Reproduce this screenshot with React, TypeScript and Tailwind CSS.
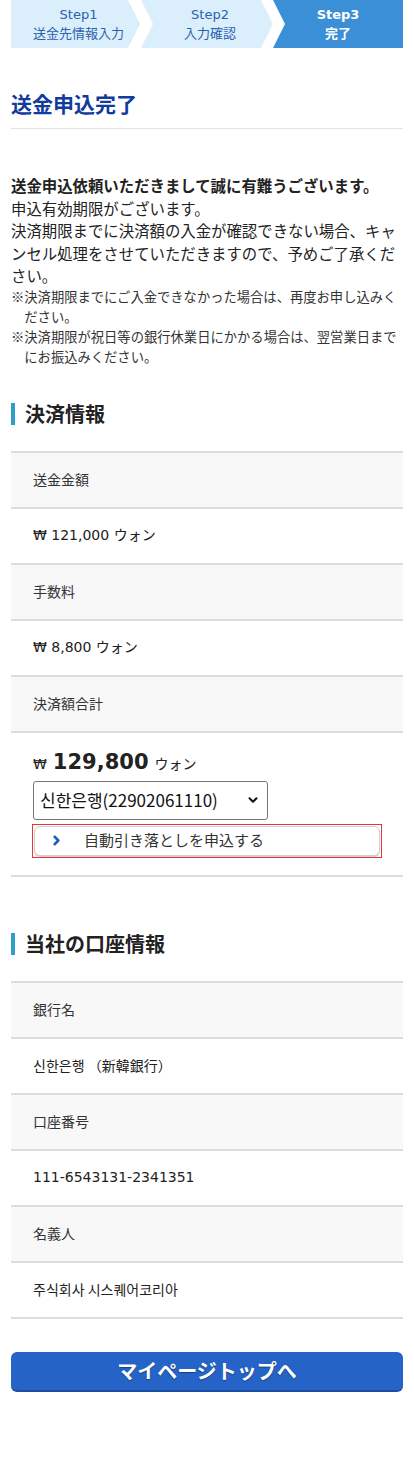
import React from 'react';
import { ChevronDown, ChevronRight } from 'lucide-react';

const jp = 'font-["Noto_Sans_CJK_JP","Noto_Sans_CJK_KR",sans-serif]';
const mix = 'font-["DejaVu_Sans","Noto_Sans_CJK_JP","Noto_Sans_CJK_KR",sans-serif]';
const kr = 'font-["Noto_Sans_CJK_KR","Noto_Sans_CJK_JP",sans-serif]';

const StepBar: React.FC = () => (
  <div className="flex px-[11px] h-[48px]">
    <div className="w-[129px] h-full bg-[#dbeefc] pl-[6px] flex flex-col items-center justify-center [clip-path:polygon(0_0,calc(100%-12px)_0,100%_50%,calc(100%-12px)_100%,0_100%)]">
      <div className={`${mix} text-[13px] leading-[18px] text-[#2b62ad]`}>Step1</div>
      <div className={`${jp} text-[13px] leading-[18px] text-[#2b62ad]`}>送金先情報入力</div>
    </div>
    <div className="ml-[1px] w-[132px] h-full bg-[#dbeefc] pl-[6px] flex flex-col items-center justify-center [clip-path:polygon(0_0,calc(100%-12px)_0,100%_50%,calc(100%-12px)_100%,0_100%,12px_50%)]">
      <div className={`${mix} text-[13px] leading-[18px] text-[#2b62ad]`}>Step2</div>
      <div className={`${jp} text-[13px] leading-[18px] text-[#2b62ad]`}>入力確認</div>
    </div>
    <div className="flex-1 h-full bg-[#3b8fd6] flex flex-col items-center justify-center [clip-path:polygon(0_0,100%_0,100%_100%,0_100%,12px_50%)]">
      <div className={`${mix} text-[13px] leading-[18px] font-bold text-white`}>Step3</div>
      <div className={`${jp} text-[13px] leading-[18px] font-bold text-white`}>完了</div>
    </div>
  </div>
);

const SectionHeading: React.FC<{ title: string }> = ({ title }) => (
  <div className="flex items-center h-[28px]">
    <span className="w-[4px] h-[22px] bg-[#2aa0c6] mr-[10px]" />
    <h2 className={`${jp} text-[20px] leading-[28px] font-bold text-[#222]`}>{title}</h2>
  </div>
);

const LabelRow: React.FC<{ label: string }> = ({ label }) => (
  <div className={`${jp} border-t-2 border-[#dddddd] bg-[#f8f8f8] h-[56px] flex items-center px-[22px] text-[14px] text-[#333]`}>
    {label}
  </div>
);

const ValueRow: React.FC<{ children: React.ReactNode; font?: string }> = ({ children, font = mix }) => (
  <div className={`${font} border-t-2 border-[#dddddd] bg-white h-[56px] flex items-center px-[22px] text-[14px] text-[#222]`}>
    {children}
  </div>
);

export default function App() {
  return (
    <div className="w-[414px] bg-white pb-[66px]">
      <StepBar />

      <div className="px-[11px]">
        <h1 className={`${jp} pt-[40px] pb-[10px] text-[21px] leading-[30px] font-bold text-[#123c9c] border-b border-[#e3e3e3]`}>
          送金申込完了
        </h1>

        <div className={`${jp} mt-[45px] text-[15.4px] leading-[22.5px] text-[#222]`}>
          <p className="font-bold">送金申込依頼いただきまして誠に有難うございます。</p>
          <p>申込有効期限がございます。</p>
          <p>決済期限までに決済額の入金が確認できない場合、キャンセル処理をさせていただきますので、予めご了承ください。</p>
        </div>
        <div className={`${jp} text-[13.3px] leading-[20px] text-[#333]`}>
          <p className="pl-[1em] -indent-[1em]">※決済期限までにご入金できなかった場合は、再度お申し込みください。</p>
          <p className="pl-[1em] -indent-[1em]">※決済期限が祝日等の銀行休業日にかかる場合は、翌営業日までにお振込みください。</p>
        </div>

        <div className="mt-[33px]">
          <SectionHeading title="決済情報" />
        </div>

        <div className="mt-[23px] border-b-2 border-[#dddddd]">
          <LabelRow label="送金金額" />
          <ValueRow>₩ 121,000 ウォン</ValueRow>
          <LabelRow label="手数料" />
          <ValueRow>₩ 8,800 ウォン</ValueRow>
          <LabelRow label="決済額合計" />
          <div className="border-t-2 border-[#dddddd] px-[22px] pt-[15px] pb-[17px]">
            <div className={`${mix} flex items-baseline leading-[28px] text-[#222]`}>
              <span className="text-[14px]">₩</span>
              <span className="ml-[6px] text-[21px] font-bold">129,800</span>
              <span className="ml-[6px] text-[14px]">ウォン</span>
            </div>
            <div className={`${kr} mt-[3px] w-[235px] h-[39px] border border-[#767676] rounded-[3px] flex items-center justify-between pl-[6px] pr-[7px] text-[17px] text-[#111]`}>
              <span>신한은행(22902061110)</span>
              <ChevronDown className="w-[14px] h-[14px] text-[#111]" strokeWidth={3.5} />
            </div>
            <div className="mt-[4px] -ml-[1px] w-[350px] h-[34px] border border-[#e8333a] p-px">
              <div className="h-full border border-[#cfcfcf] rounded-[6px] bg-white shadow-[0_1px_1px_rgba(0,0,0,0.2)] flex items-center pl-[14px]">
                <ChevronRight className="w-[15px] h-[15px] text-[#1e5cc0]" strokeWidth={4} />
                <span className={`${jp} ml-[20px] text-[15px] text-[#333]`}>自動引き落としを申込する</span>
              </div>
            </div>
          </div>
        </div>

        <div className="mt-[53px]">
          <SectionHeading title="当社の口座情報" />
        </div>

        <div className="mt-[23px] border-b-2 border-[#dddddd]">
          <LabelRow label="銀行名" />
          <ValueRow font={kr}>신한은행 （新韓銀行）</ValueRow>
          <LabelRow label="口座番号" />
          <ValueRow>111-6543131-2341351</ValueRow>
          <LabelRow label="名義人" />
          <ValueRow font={kr}>주식회사 시스퀘어코리아</ValueRow>
        </div>

        <button
          className={`${jp} mt-[33px] w-full h-[40px] rounded-[6px] bg-[#2563c6] border-b-2 border-[#1b4ea3] text-white text-[20px] font-bold [text-shadow:0_1px_1px_rgba(0,0,0,0.35)]`}
        >
          マイページトップへ
        </button>
      </div>
    </div>
  );
}
